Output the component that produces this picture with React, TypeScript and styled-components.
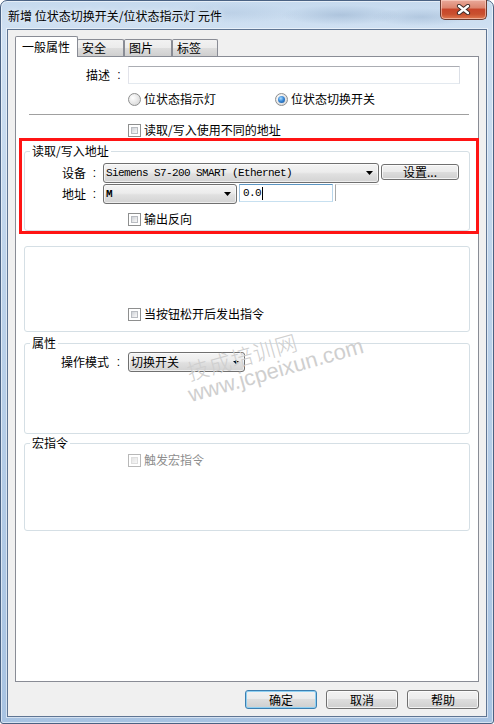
import React from "react";
import styled, { createGlobalStyle, css } from "styled-components";

const GlobalStyle = createGlobalStyle`
  html, body { margin: 0; padding: 0; background: #ffffff; }
  body {
    font-family: "Noto Sans CJK SC", "Noto Sans", sans-serif;
    font-size: 12px;
    color: #000;
  }
  * { box-sizing: border-box; }
`;

const Window = styled.div`
  width: 494px;
  height: 724px;
  display: flex;
  flex-direction: column;
  padding: 0 6px 6px 6px;
  border: 1px solid #4a6283;
  border-radius: 7px 7px 3px 3px;
  background:
    radial-gradient(ellipse 60px 10px at 340px 14px, rgba(120,150,185,0.35), transparent),
    radial-gradient(ellipse 50px 9px at 420px 16px, rgba(120,150,185,0.3), transparent),
    radial-gradient(ellipse 70px 10px at 230px 12px, rgba(150,175,205,0.25), transparent),
    linear-gradient(180deg, #c6daee 0%, #cfe0f2 4%, #bcd2ea 40%, #a8c3e2 100%);
  box-shadow: inset 0 0 0 1px rgba(255, 255, 255, 0.55);
`;

const TitleBar = styled.div`
  height: 28px;
  display: flex;
  align-items: flex-start;
  flex-shrink: 0;
`;

const Title = styled.div`
  margin: 7px 0 0 1px;
  line-height: 16px;
  font-size: 12px;
  color: #000;
  text-shadow: 0 0 6px rgba(255, 255, 255, 0.9);
  white-space: nowrap;
`;

const CloseButton = styled.div`
  margin: -1px 0 0 auto;
  width: 47px;
  height: 20px;
  border: 1px solid #6d3a2f;
  border-top: none;
  border-radius: 0 0 5px 5px;
  background: linear-gradient(180deg, #e9a99b 0%, #dd8670 40%, #c8462b 50%, #c9502f 75%, #e07a52 100%);
  box-shadow: inset 0 0 0 1px rgba(255, 220, 210, 0.55);
  display: flex;
  align-items: center;
  justify-content: center;
`;

const Client = styled.div`
  flex: 1;
  display: flex;
  flex-direction: column;
  background: #f0f0f0;
  border: 1px solid #5f7593;
  box-shadow: 0 0 0 1px rgba(255, 255, 255, 0.5);
  padding: 6px 7px 0 7px;
`;

const TabStrip = styled.div`
  display: flex;
  align-items: flex-end;
  height: 20px;
  position: relative;
  z-index: 1;
`;

const Tab = styled.div<{ $active?: boolean; $w: number; $overlap?: boolean }>`
  width: ${(p) => p.$w}px;
  border: 1px solid #898c95;
  border-bottom: none;
  line-height: 16px;
  white-space: nowrap;
  border-radius: 2px 2px 0 0;
  ${(p) =>
    p.$active
      ? css`
          height: 21px;
          margin-bottom: -1px;
          background: #ffffff;
          padding: 2px 0 0 6px;
          position: relative;
          z-index: 2;
        `
      : css`
          height: 17px;
          margin-left: ${p.$overlap ? -1 : 0}px;
          padding: 0 0 0 4px;
          background: linear-gradient(180deg, #f2f2f2 0%, #ebebeb 50%, #dddddd 51%, #cfcfcf 100%);
        `}
`;

const Panel = styled.div`
  position: relative;
  width: 464px;
  height: 626px;
  background: #ffffff;
  border: 1px solid #898c95;
  display: flex;
  flex-direction: column;
  flex-shrink: 0;
`;

const Row = styled.div<{ $top: number; $h: number; $indent?: number }>`
  display: flex;
  align-items: center;
  margin-top: ${(p) => p.$top}px;
  height: ${(p) => p.$h}px;
  padding-left: ${(p) => p.$indent ?? 0}px;
  flex-shrink: 0;
`;

const Label = styled.div<{ $w: number }>`
  width: ${(p) => p.$w}px;
  text-align: right;
  line-height: 16px;
  white-space: nowrap;
`;

const Colon = styled.div<{ $w: number }>`
  width: ${(p) => p.$w}px;
  text-align: center;
  line-height: 16px;
  font-family: "Liberation Sans", sans-serif;
`;

const TextBox = styled.div<{ $w: number; $focus?: boolean; $ml?: number }>`
  width: ${(p) => p.$w}px;
  height: 18px;
  margin-left: ${(p) => p.$ml ?? 0}px;
  align-self: ${(p) => (p.$focus ? "flex-start" : "center")};
  border: 1px solid;
  border-color: ${(p) =>
    p.$focus ? "#5b95c2 #b7d5ea #c7e0f0 #9fc3e0" : "#abadb3 #dbdfe6 #e3e9ef #e2e3ea"};
  background: #fff;
  display: flex;
  align-items: center;
  padding-left: 3px;
  font-family: "Liberation Mono", monospace;
  font-size: 11px;
  letter-spacing: -0.6px;
`;

const Caret = styled.span`
  display: inline-block;
  width: 1px;
  height: 13px;
  background: #000;
  margin-left: 1px;
`;

const Bracket = styled.div`
  width: 44px;
  height: 17px;
  margin-left: 2px;
  align-self: flex-start;
  border-left: 1px solid #a8a8a8;
  border-top: 1px solid #e4e4e4;
`;

const Combo = styled.div<{ $w: number; $mono?: boolean }>`
  width: ${(p) => p.$w}px;
  height: 20px;
  border: 1px solid #707070;
  border-radius: 3px;
  background: linear-gradient(180deg, #f4f4f4 0%, #ececec 45%, #e0e0e0 55%, #d3d3d3 100%);
  box-shadow: inset 0 0 0 1px rgba(255, 255, 255, 0.6);
  display: flex;
  align-items: center;
  justify-content: space-between;
  padding: 0 5px 0 2px;
  flex-shrink: 0;
  ${(p) =>
    p.$mono
      ? css`
          font-family: "Liberation Mono", monospace;
          font-size: 11px;
          letter-spacing: -0.6px;
        `
      : css`
          line-height: 16px;
        `}
`;

const ComboText = styled.span<{ $bold?: boolean }>`
  white-space: nowrap;
  font-weight: ${(p) => (p.$bold ? 700 : 400)};
`;

const Button = styled.div<{ $w: number; $h: number; $default?: boolean; $ml?: number; $mt?: number }>`
  width: ${(p) => p.$w}px;
  height: ${(p) => p.$h}px;
  margin-left: ${(p) => p.$ml ?? 0}px;
  margin-top: ${(p) => p.$mt ?? 0}px;
  align-self: flex-start;
  border: 1px solid ${(p) => (p.$default ? "#3c7fb1" : "#707070")};
  border-radius: 3px;
  background: linear-gradient(180deg, #f2f2f2 0%, #ebebeb 49%, #dddddd 50%, #cfcfcf 100%);
  box-shadow: inset 0 0 0 1px ${(p) => (p.$default ? "#8fd0f2" : "rgba(255,255,255,0.75)")};
  display: flex;
  align-items: center;
  justify-content: center;
  line-height: 16px;
  flex-shrink: 0;
  white-space: nowrap;
`;

const Separator = styled.div`
  height: 1px;
  margin: 7px 9px 0 13px;
  background: #a0a0a0;
  flex-shrink: 0;
`;

const Group = styled.div<{ $top: number; $h: number }>`
  margin: ${(p) => p.$top}px 8px 0 8px;
  height: ${(p) => p.$h}px;
  border: 1px solid #d5dfe5;
  border-radius: 3px;
  display: flex;
  flex-direction: column;
  flex-shrink: 0;
`;

const Legend = styled.div`
  align-self: flex-start;
  margin: -9px 0 0 5px;
  padding: 0 2px;
  height: 16px;
  line-height: 16px;
  background: #fff;
`;

const Check = styled.span<{ $disabled?: boolean }>`
  width: 13px;
  height: 13px;
  flex-shrink: 0;
  border: 1px solid ${(p) => (p.$disabled ? "#b8b8b8" : "#8e8f8f")};
  background: #fff;
  padding: 2px;
  display: inline-flex;
  &::after {
    content: "";
    flex: 1;
    background: ${(p) =>
      p.$disabled
        ? "linear-gradient(135deg, #e4e4e4 0%, #f7f7f7 100%)"
        : "linear-gradient(135deg, #cdd1d6 0%, #eeeeef 70%, #f6f6f6 100%)"};
    border: 1px solid ${(p) => (p.$disabled ? "#dedede" : "#b9bcc1")};
  }
`;

const Radio = styled.span<{ $checked?: boolean }>`
  width: 13px;
  height: 13px;
  flex-shrink: 0;
  border-radius: 50%;
  border: 1px solid #8e8f8f;
  background: radial-gradient(circle at 35% 35%, #ffffff 0%, #eaeaea 45%, #cfcfcf 100%);
  display: inline-flex;
  align-items: center;
  justify-content: center;
  &::after {
    content: "";
    width: 7px;
    height: 7px;
    border-radius: 50%;
    display: ${(p) => (p.$checked ? "block" : "none")};
    background: radial-gradient(circle at 40% 35%, #a9dcff 0%, #3c8ad8 45%, #0d4a8f 100%);
  }
`;

const OptionText = styled.span<{ $disabled?: boolean }>`
  margin-left: 3px;
  line-height: 16px;
  white-space: nowrap;
  color: ${(p) => (p.$disabled ? "#8d8d8d" : "#000")};
`;

const RadioItem = styled.div<{ $w?: number }>`
  display: flex;
  align-items: center;
  width: ${(p) => (p.$w ? `${p.$w}px` : "auto")};
`;

const Highlight = styled.div`
  position: absolute;
  left: 3px;
  top: 81px;
  width: 460px;
  height: 96px;
  border: 3px solid #ff1414;
  pointer-events: none;
`;

const Watermark = styled.div`
  position: absolute;
  left: 163px;
  top: 304px;
  transform: rotate(-16deg);
  transform-origin: left top;
  color: #cfcfcf;
  pointer-events: none;
  white-space: nowrap;
`;

const WatermarkCn = styled.div`
  font-size: 22px;
  line-height: 24px;
  font-weight: 300;
  margin-left: 5px;
  letter-spacing: 0.8px;
`;

const WatermarkUrl = styled.div`
  font-family: "Liberation Sans", sans-serif;
  font-size: 22px;
  line-height: 24px;
`;

const ButtonBar = styled.div`
  display: flex;
  justify-content: flex-end;
  gap: 9px;
  margin-top: 8px;
`;

const Arrow = () => (
  <svg width="7" height="4" viewBox="0 0 7 4">
    <path d="M0 0H7L3.5 4Z" fill="#000" />
  </svg>
);

const SmallArrow = () => (
  <svg width="6" height="5" viewBox="0 0 6 5">
    <path d="M0 1H6L3 4Z" fill="#000" />
    <path d="M3 0V2" stroke="#000" strokeWidth="1" />
  </svg>
);

const CloseGlyph = () => (
  <svg width="15" height="11" viewBox="0 0 15 11">
    <path d="M3 2L12 9M12 2L3 9" stroke="#3a2a28" strokeWidth="4.2" strokeLinecap="round" />
    <path d="M3 2L12 9M12 2L3 9" stroke="#ffffff" strokeWidth="2.4" strokeLinecap="round" />
  </svg>
);

export default function App() {
  return (
    <>
      <GlobalStyle />
      <Window>
        <TitleBar>
          <Title>新增 位状态切换开关/位状态指示灯 元件</Title>
          <CloseButton>
            <CloseGlyph />
          </CloseButton>
        </TitleBar>
        <Client>
          <TabStrip>
            <Tab $active $w={63}>一般属性</Tab>
            <Tab $w={47} $overlap>安全</Tab>
            <Tab $w={48}>图片</Tab>
            <Tab $w={46}>标签</Tab>
          </TabStrip>
          <Panel>
            <Row $top={9} $h={18}>
              <Label $w={94}>描述</Label>
              <Colon $w={18}>:</Colon>
              <TextBox $w={332} />
            </Row>
            <Row $top={7} $h={16} $indent={112}>
              <RadioItem $w={147}>
                <Radio />
                <OptionText>位状态指示灯</OptionText>
              </RadioItem>
              <RadioItem>
                <Radio $checked />
                <OptionText>位状态切换开关</OptionText>
              </RadioItem>
            </Row>
            <Separator />
            <Row $top={7} $h={16} $indent={112}>
              <Check />
              <OptionText>读取/写入使用不同的地址</OptionText>
            </Row>

            <Group $top={13} $h={80}>
              <Legend>读取/写入地址</Legend>
              <Row $top={4} $h={20}>
                <Label $w={61}>设备</Label>
                <Colon $w={17}>:</Colon>
                <Combo $w={276} $mono>
                  <ComboText>Siemens S7-200 SMART (Ethernet)</ComboText>
                  <Arrow />
                </Combo>
                <Button $w={78} $h={16} $ml={2} $mt={1}>
                  设置...
                </Button>
              </Row>
              <Row $top={1} $h={20}>
                <Label $w={61}>地址</Label>
                <Colon $w={17}>:</Colon>
                <Combo $w={134} $mono>
                  <ComboText $bold>M</ComboText>
                  <Arrow />
                </Combo>
                <TextBox $w={94} $focus $ml={2}>
                  0.0
                  <Caret />
                </TextBox>
                <Bracket />
              </Row>
              <Row $top={7} $h={16} $indent={103}>
                <Check />
                <OptionText>输出反向</OptionText>
              </Row>
            </Group>

            <Group $top={15} $h={86}>
              <Row $top={59} $h={16} $indent={103}>
                <Check />
                <OptionText>当按钮松开后发出指令</OptionText>
              </Row>
            </Group>

            <Group $top={11} $h={91}>
              <Legend>属性</Legend>
              <Row $top={1} $h={20}>
                <Label $w={84}>操作模式</Label>
                <Colon $w={19}>:</Colon>
                <Combo $w={117}>
                  <ComboText>切换开关</ComboText>
                  <SmallArrow />
                </Combo>
              </Row>
            </Group>

            <Group $top={9} $h={88}>
              <Legend>宏指令</Legend>
              <Row $top={1} $h={16} $indent={103}>
                <Check $disabled />
                <OptionText $disabled>触发宏指令</OptionText>
              </Row>
            </Group>

            <Highlight />
            <Watermark>
              <WatermarkCn>技成培训网</WatermarkCn>
              <WatermarkUrl>www.jcpeixun.com</WatermarkUrl>
            </Watermark>
          </Panel>
          <ButtonBar>
            <Button $w={72} $h={19} $default>确定</Button>
            <Button $w={72} $h={19}>取消</Button>
            <Button $w={72} $h={19}>帮助</Button>
          </ButtonBar>
        </Client>
      </Window>
    </>
  );
}
